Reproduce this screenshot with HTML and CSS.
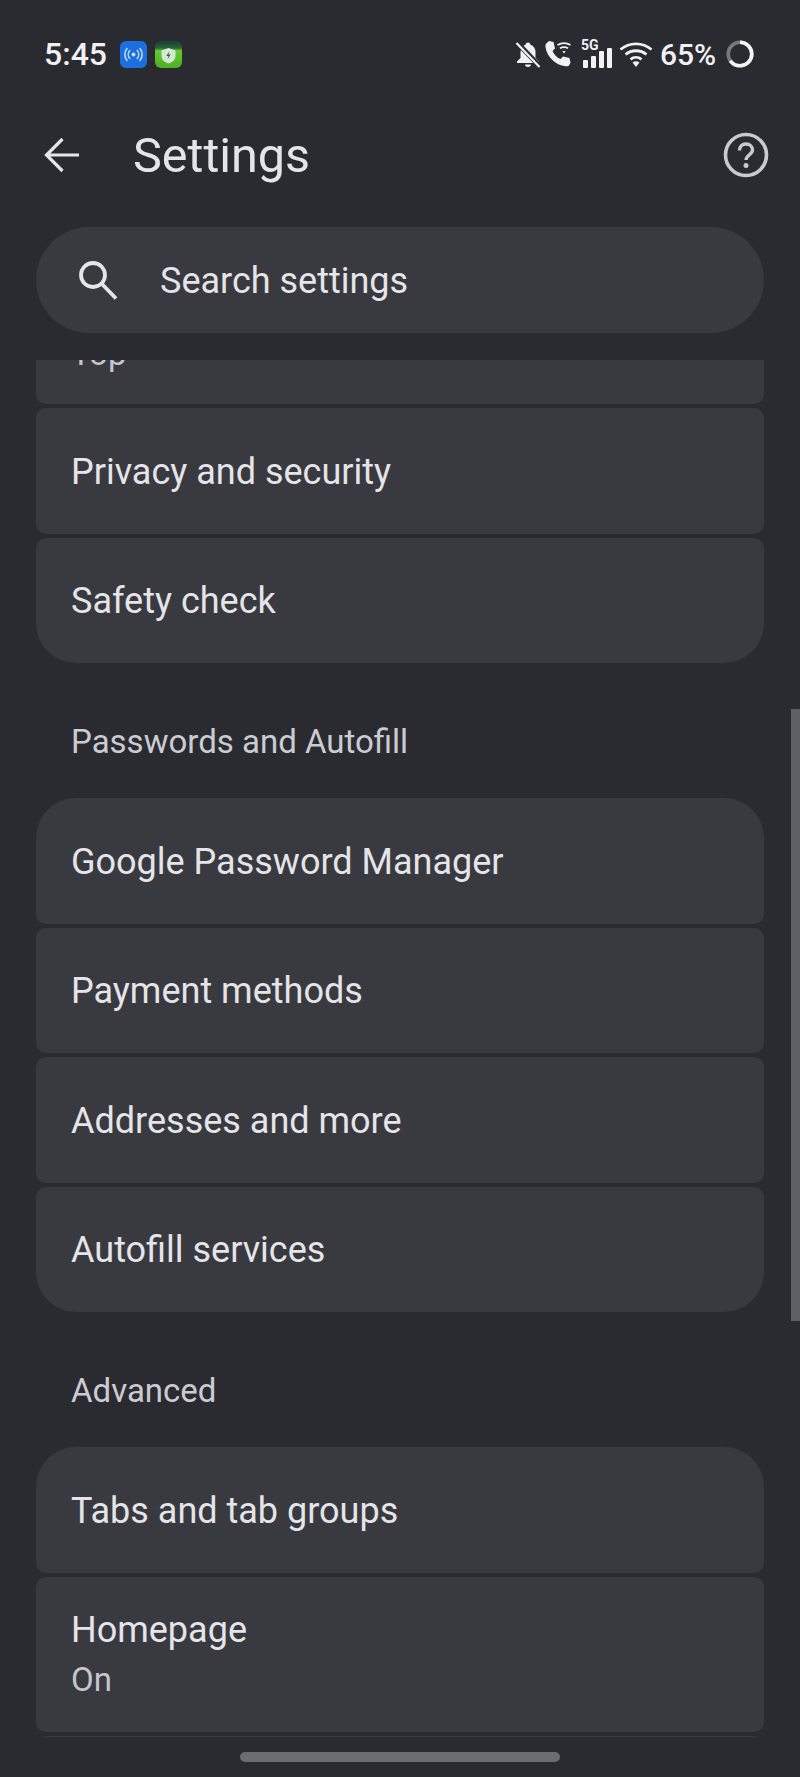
FILE: index.html
```html
<!DOCTYPE html>
<html lang="en">
<head>
  <meta charset="UTF-8" />
  <title>Settings</title>
  <link rel="stylesheet" href="styles.css">
</head>
<body>
<div class="screen">

  <div class="status">
    <span class="time">5:45</span>
    <svg class="app-icon" width="27" height="27" viewBox="0 0 27 27">
      <rect width="27" height="27" rx="6" fill="#1b6fdf"/>
      <circle cx="13.5" cy="13.5" r="2" fill="#c6dcfa"/>
      <path d="M9.8 9.5a6 6 0 0 0 0 8M17.2 9.5a6 6 0 0 1 0 8M7 7.5a9.5 9.5 0 0 0 0 12M20 7.5a9.5 9.5 0 0 1 0 12" fill="none" stroke="#c6dcfa" stroke-width="1.5" stroke-linecap="round"/>
    </svg>
    <svg class="app-icon" width="27" height="27" viewBox="0 0 27 27">
      <defs>
        <linearGradient id="greenFill" x1="0" y1="0" x2="0" y2="1">
          <stop offset="0" stop-color="#173f38"/>
          <stop offset="0.26" stop-color="#2a6236"/>
          <stop offset="0.36" stop-color="#66c92e"/>
          <stop offset="1" stop-color="#4cae22"/>
        </linearGradient>
      </defs>
      <rect width="27" height="27" rx="6" fill="url(#greenFill)"/>
      <path d="M13.5 7l7 2.500v5.500c0 3.800-3 6.200-7 7.500-4-1.300-7-3.700-7-7.500V9.500z" fill="#d5e8d8"/>
      <path d="M14.500 10l-3.200 5h2.200l-1 3.500 3.200-5h-2.200z" fill="#2c6f3a"/>
    </svg>
    <span class="status-space"></span>
    <svg width="26" height="27" viewBox="0 0 26 27">
      <path d="M13 1.500c-1.500 0-2.400 1-2.500 2.300C7.500 4.800 5.500 7.500 5.500 11v6L2 20.500V22h22v-1.500L20.500 17v-6c0-3.500-2-6.200-5-7.200C15.400 2.500 14.500 1.500 13 1.500zM10 23.500h6c0 1.500-1.300 2.500-3 2.500s-3-1-3-2.500z" fill="#f1f1f3"/>
      <path d="M2 1.500l23 24" stroke="#2a2b30" stroke-width="5"/>
      <path d="M1.500 2l23 24" stroke="#f1f1f3" stroke-width="2.200"/>
    </svg>
    <svg class="call" width="29" height="28" viewBox="0 0 28 28">
      <path d="M4.500 1L9 2l1.500 6.500-2.500 2.500c1.500 3.700 4.300 6.500 8 8l2.500-2.500 6.500 1.500 1 4.500-1.500 3c-1 .8-2 1-3.500.8C11 25.300 2.200 16.500 1 7c-.2-1.500 0-2.500.8-3.500z" fill="#f1f1f3"/>
      <path d="M13 5a13 13 0 0 1 13 0M15.500 8.200a8 8 0 0 1 8 0" fill="none" stroke="#f1f1f3" stroke-width="1.800"/>
      <path d="M17.800 11.300a4 4 0 0 1 3.400 0l-1.700 2.200z" fill="#f1f1f3"/>
    </svg>
    <span class="signal">
      <span class="five-g">5G</span>
      <span class="bars">
        <i class="bar bar-1"></i><i class="bar bar-2"></i><i class="bar bar-3"></i><i class="bar bar-4"></i>
      </span>
    </span>
    <svg class="wifi" width="34" height="28" viewBox="0 0 34 28">
      <path d="M1.500 9.500a24 24 0 0 1 31 0M6.500 14.500a16.500 16.500 0 0 1 21 0M11.500 19.300a9 9 0 0 1 11 0" fill="none" stroke="#f1f1f3" stroke-width="2.800"/>
      <path d="M13.500 22.500a6 6 0 0 1 7 0L17 27z" fill="#f1f1f3"/>
    </svg>
    <span class="battery-text">65%</span>
    <svg class="battery" width="28" height="28" viewBox="0 0 28 28">
      <circle cx="14" cy="14" r="11.800" fill="none" stroke="#77787c" stroke-width="3.600"/>
      <circle cx="14" cy="14" r="11.800" fill="none" stroke="#f4f4f6" stroke-width="3.600" stroke-dasharray="48.200 74.200" transform="rotate(-90 14 14)"/>
    </svg>
  </div>

  <div class="toolbar">
    <svg class="back" width="36" height="36" viewBox="0 0 36 36">
      <path d="M35 18H3M18.500 2L2.500 18l16 16" fill="none" stroke="#e6e6ea" stroke-width="3.200"/>
    </svg>
    <h1 class="title">Settings</h1>
    <svg class="help" width="46" height="46" viewBox="0 0 46 46">
      <circle cx="23" cy="23" r="20.500" fill="none" stroke="#c9cad0" stroke-width="3.600"/>
      <path d="M16.500 18.500c0-4 2.800-6.500 6.500-6.500s6.500 2.500 6.500 6c0 4.500-6.500 5-6.500 10" fill="none" stroke="#c9cad0" stroke-width="3.400"/>
      <circle cx="23" cy="33.500" r="2.500" fill="#c9cad0"/>
    </svg>
  </div>

  <div class="search">
    <svg width="40" height="40" viewBox="0 0 40 40">
      <circle cx="15" cy="15" r="12" fill="none" stroke="#e6e6ea" stroke-width="3.800"/>
      <path d="M23.500 23.500L38 38.500" stroke="#e6e6ea" stroke-width="3.800"/>
    </svg>
    <span class="search-text">Search settings</span>
  </div>

  <div class="list">
    <div class="list-inner">
      <div class="group">
        <div class="row row-two row-clipped"><span class="row-sub">Top</span></div>
        <div class="row"><span class="row-title">Privacy and security</span></div>
        <div class="row"><span class="row-title">Safety check</span></div>
      </div>

      <div class="section">Passwords and Autofill</div>
      <div class="group">
        <div class="row"><span class="row-title">Google Password Manager</span></div>
        <div class="row"><span class="row-title">Payment methods</span></div>
        <div class="row"><span class="row-title">Addresses and more</span></div>
        <div class="row"><span class="row-title">Autofill services</span></div>
      </div>

      <div class="section">Advanced</div>
      <div class="group">
        <div class="row"><span class="row-title">Tabs and tab groups</span></div>
        <div class="row row-two"><span class="row-title">Homepage</span><span class="row-sub">On</span></div>
        <div class="row"></div>
      </div>
    </div>
  </div>

  <div class="nav"><div class="handle"></div></div>

  <div class="scrollbar"></div>
</div>
</body>
</html>
```

FILE: styles.css
```css
* { box-sizing: border-box; }

html, body {
  margin: 0;
  padding: 0;
  background: #2a2b30;
}

.screen {
  position: relative;
  width: 800px;
  height: 1777px;
  overflow: hidden;
  display: flex;
  flex-direction: column;
  font-family: Roboto, "Noto Sans", sans-serif;
  color: #e4e4e9;
}

/* status bar */
.status {
  height: 108px;
  padding: 0 46px 0 44px;
  display: flex;
  align-items: center;
  color: #f1f1f3;
  flex: none;
}
.status svg { flex: none; display: block; }
.time {
  font-size: 32px;
  font-weight: 500;
  width: 76px;
}
.app-icon { margin-right: 8px; }
.status-space { flex: 1; }
.call { margin-left: 3px; }
.signal {
  position: relative;
  width: 30px;
  height: 28px;
  margin-left: 8px;
}
.five-g {
  position: absolute;
  left: 0;
  top: -2px;
  font-size: 14px;
  font-weight: 700;
  line-height: 14px;
}
.bars {
  display: flex;
  align-items: flex-end;
  gap: 3px;
  position: absolute;
  left: 2px;
  bottom: 0;
}
.bar {
  width: 5px;
  background: #f1f1f3;
  border-radius: 1px;
}
.bar-1 { height: 8px; }
.bar-2 { height: 12px; }
.bar-3 { height: 17px; }
.bar-4 { height: 20px; }
.wifi { margin-left: 8px; }
.battery-text {
  font-size: 30px;
  font-weight: 500;
  margin-left: 7px;
  width: 59px;
}
.battery { margin-left: 7px; }

/* toolbar */
.toolbar {
  height: 94px;
  flex: none;
  display: flex;
  align-items: center;
  padding: 0 31px 0 44px;
}
.back { flex: none; }
.title {
  flex: 1;
  margin: 0 0 0 53px;
  font-size: 48.5px;
  font-weight: 400;
  color: #e4e4e9;
}

/* search */
.search {
  flex: none;
  height: 106px;
  margin: 25px 36px 27px;
  padding-left: 42px;
  border-radius: 53px;
  background: #393a3f;
  display: flex;
  align-items: center;
}
.search-text {
  margin: 2px 0 0 42px;
  font-size: 36px;
}

/* settings list, scrolled so the first card is cut off */
.list {
  flex: 1;
  overflow: hidden;
  min-height: 0;
}
.list-inner {
  margin-top: -111px;
  padding: 0 36px;
}
.group {
  display: flex;
  flex-direction: column;
  gap: 4px;
  border-radius: 40px;
  overflow: hidden;
}
.row {
  height: 125.5px;
  background: #393a3f;
  border-radius: 10px;
  padding: 2px 35px 0;
  display: flex;
  flex-direction: column;
  justify-content: center;
}
.row-two {
  height: 155px;
  padding-top: 0;
}
.row-clipped {
  justify-content: flex-end;
  padding-bottom: 29px;
}
.row-title {
  font-size: 36px;
  line-height: 46px;
}
.row-sub {
  font-size: 33px;
  line-height: 42px;
  margin-top: 6px;
  color: #c4c6cc;
}
.section {
  height: 135px;
  padding: 59px 35px 0;
  font-size: 33px;
  line-height: 40px;
  color: #cbccd2;
}

/* gesture bar */
.nav {
  flex: none;
  height: 40px;
  padding-top: 15px;
  background: #2a2b30;
}
.handle {
  width: 320px;
  height: 10px;
  margin: 0 auto;
  border-radius: 5px;
  background: #6c6d72;
}

.scrollbar {
  position: absolute;
  right: 0;
  top: 709px;
  width: 9px;
  height: 612px;
  background: #5f6065;
}
```
